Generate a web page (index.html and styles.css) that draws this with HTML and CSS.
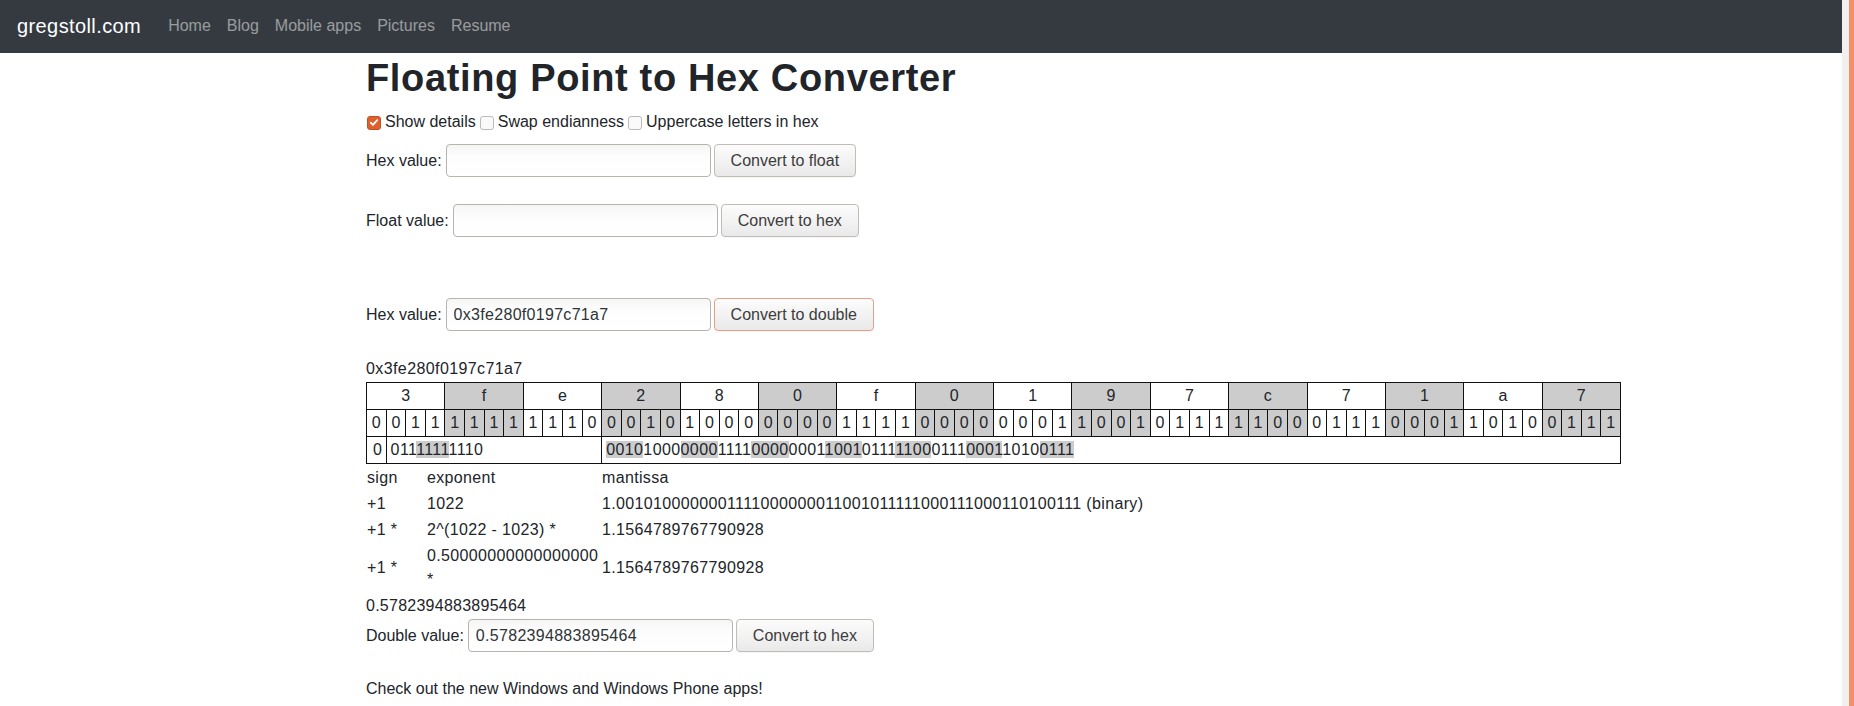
FILE: index.html
```html
<!DOCTYPE html>
<html lang="en">
<head>
<meta charset="utf-8">
<title>Floating Point to Hex Converter</title>
<link rel="stylesheet" href="styles.css">
</head>
<body>
<div class="page">
  <nav class="navbar">
    <a class="brand" href="#">gregstoll.com</a>
    <a class="nav-link" href="#">Home</a>
    <a class="nav-link" href="#">Blog</a>
    <a class="nav-link" href="#">Mobile apps</a>
    <a class="nav-link" href="#">Pictures</a>
    <a class="nav-link" href="#">Resume</a>
  </nav>
  <main class="container">
    <h1 class="title">Floating Point to Hex Converter</h1>
    <div class="opts">
      <label class="opt"><span class="cb checked"><svg width="13" height="13" viewBox="0 0 13 13"><path d="M3 6.6 L5.4 9 L10 4" fill="none" stroke="#fff" stroke-width="1.9" stroke-linecap="round" stroke-linejoin="round"/></svg></span>Show details</label>
      <label class="opt"><span class="cb"></span>Swap endianness</label>
      <label class="opt"><span class="cb"></span>Uppercase letters in hex</label>
    </div>
    <div class="form-row r1">
      <span class="lbl">Hex value:</span>
      <input class="field" type="text" value="">
      <button class="btn">Convert to float</button>
    </div>
    <div class="form-row r2">
      <span class="lbl">Float value:</span>
      <input class="field" type="text" value="">
      <button class="btn">Convert to hex</button>
    </div>
    <div class="form-row r3">
      <span class="lbl">Hex value:</span>
      <input class="field num" type="text" value="0x3fe280f0197c71a7">
      <button class="btn btn-focus">Convert to double</button>
    </div>
    <div class="hexout">0x3fe280f0197c71a7</div>
    <table class="bits">
      <colgroup>
        <col><col><col><col><col><col><col><col><col><col><col><col><col><col><col><col>
        <col><col><col><col><col><col><col><col><col><col><col><col><col><col><col><col>
        <col><col><col><col><col><col><col><col><col><col><col><col><col><col><col><col>
        <col><col><col><col><col><col><col><col><col><col><col><col><col><col><col><col>
      </colgroup>
      <tr class="hexrow">
        <td colspan="4">3</td><td colspan="4" class="g">f</td><td colspan="4">e</td><td colspan="4" class="g">2</td>
        <td colspan="4">8</td><td colspan="4" class="g">0</td><td colspan="4">f</td><td colspan="4" class="g">0</td>
        <td colspan="4">1</td><td colspan="4" class="g">9</td><td colspan="4">7</td><td colspan="4" class="g">c</td>
        <td colspan="4">7</td><td colspan="4" class="g">1</td><td colspan="4">a</td><td colspan="4" class="g">7</td>
      </tr>
      <tr class="bitrow">
        <td>0</td><td>0</td><td>1</td><td>1</td>
        <td class="g">1</td><td class="g">1</td><td class="g">1</td><td class="g">1</td>
        <td>1</td><td>1</td><td>1</td><td>0</td>
        <td class="g">0</td><td class="g">0</td><td class="g">1</td><td class="g">0</td>
        <td>1</td><td>0</td><td>0</td><td>0</td>
        <td class="g">0</td><td class="g">0</td><td class="g">0</td><td class="g">0</td>
        <td>1</td><td>1</td><td>1</td><td>1</td>
        <td class="g">0</td><td class="g">0</td><td class="g">0</td><td class="g">0</td>
        <td>0</td><td>0</td><td>0</td><td>1</td>
        <td class="g">1</td><td class="g">0</td><td class="g">0</td><td class="g">1</td>
        <td>0</td><td>1</td><td>1</td><td>1</td>
        <td class="g">1</td><td class="g">1</td><td class="g">0</td><td class="g">0</td>
        <td>0</td><td>1</td><td>1</td><td>1</td>
        <td class="g">0</td><td class="g">0</td><td class="g">0</td><td class="g">1</td>
        <td>1</td><td>0</td><td>1</td><td>0</td>
        <td class="g">0</td><td class="g">1</td><td class="g">1</td><td class="g">1</td>
      </tr>
      <tr class="partrow">
        <td class="sgn">0</td>
        <td colspan="11">011<span class="hl">1111</span>1110</td>
        <td colspan="52"><span class="hl">0010</span>1000<span class="hl">0000</span>1111<span class="hl">0000</span>0001<span class="hl">1001</span>0111<span class="hl">1100</span>0111<span class="hl">0001</span>1010<span class="hl">0111</span></td>
      </tr>
    </table>
    <table class="details">
      <tr><td class="c-sign">sign</td><td class="c-exp">exponent</td><td>mantissa</td></tr>
      <tr><td>+1</td><td>1022</td><td>1.0010100000001111000000011001011111000111000110100111 (binary)</td></tr>
      <tr><td>+1 *</td><td>2^(1022 - 1023) *</td><td>1.1564789767790928</td></tr>
      <tr><td>+1 *</td><td>0.50000000000000000 *</td><td>1.1564789767790928</td></tr>
    </table>
    <div class="result">0.5782394883895464</div>
    <div class="form-row r4">
      <span class="lbl">Double value:</span>
      <input class="field num" type="text" value="0.5782394883895464">
      <button class="btn">Convert to hex</button>
    </div>
    <p class="promo">Check out the new Windows and Windows Phone apps!</p>
  </main>
</div>
<div class="scrollbar"><div class="thumb"></div></div>
</body>
</html>
```

FILE: styles.css
```css
html, body {
  margin: 0;
  padding: 0;
  overflow: hidden;
  background: #fff;
}
body {
  font-family: "Liberation Sans", Arial, sans-serif;
  font-size: 16px;
  line-height: 24px;
  color: #212529;
}
.page {
  width: 1842px;
  height: 706px;
  overflow: hidden;
}
.navbar {
  height: 53px;
  background: #343a40;
  display: flex;
  align-items: center;
  padding: 0 16px 2px 17px;
  box-sizing: border-box;
}
.brand {
  color: #fff;
  font-size: 20px;
  line-height: 30px;
  letter-spacing: 0.4px;
  text-decoration: none;
  margin-right: 19px;
}
.nav-link {
  color: rgba(255, 255, 255, 0.5);
  text-decoration: none;
  padding: 0 8px;
  line-height: 24px;
}
.container {
  width: 1110px;
  margin: 0 auto;
  padding: 0 15px;
}
.title {
  margin: 1px 0 8px;
  font-size: 38px;
  font-weight: bold;
  letter-spacing: 0.65px;
  line-height: 48px;
  color: #212529;
}
.opts {
  display: flex;
  align-items: center;
  height: 24px;
  margin-bottom: 10px;
}
.opt {
  display: inline-flex;
  align-items: center;
  gap: 4px;
  margin-right: 3px;
}
.cb {
  width: 12px;
  height: 12px;
  border: 1px solid #bdb9b4;
  border-radius: 3px;
  background: #fafafa;
  display: inline-flex;
  align-items: center;
  justify-content: center;
  margin-left: 1px;
  margin-top: 1px;
}
.cb svg {
  display: block;
}
.cb.checked {
  background: #de602f;
  border-color: #c6501f;
}
.form-row {
  display: flex;
  align-items: center;
  height: 33px;
  gap: 4px;
}
.form-row .field {
  margin-right: -1px;
}
.r1 { margin-bottom: 27px; }
.r2 { margin-bottom: 61px; }
.r3 { margin-bottom: 26px; }
.r4 { margin-top: 1px; }
.lbl {
  white-space: nowrap;
}
.field {
  width: 265px;
  height: 33px;
  box-sizing: border-box;
  border: 1px solid #b7b3ad;
  border-radius: 4px;
  background: linear-gradient(#f6f6f6, #fdfdfd 40%, #fff);
  font-family: "Liberation Sans", Arial, sans-serif;
  font-size: 16px;
  color: #2e3436;
  padding: 0 7px;
  outline: none;
}
.field.num {
  letter-spacing: 0.3px;
}
.btn {
  height: 33px;
  box-sizing: border-box;
  border: 1px solid #c0bcb6;
  border-radius: 4px;
  background: linear-gradient(#fcfcfc, #f1f1f1 60%, #e9e9e9);
  font-family: "Liberation Sans", Arial, sans-serif;
  font-size: 16px;
  color: #3c3c3c;
  padding: 0 16px;
  box-shadow: 0 1px 0 rgba(0, 0, 0, 0.04);
}
.btn-focus {
  border-color: #e59f86;
}
.hexout {
  height: 24px;
  margin-bottom: 1px;
  letter-spacing: 0.4px;
}
.bits {
  width: 1255px;
  table-layout: fixed;
  border-collapse: collapse;
}
.bits td {
  border: 1px solid #111;
  padding: 1px 0;
  text-align: center;
  line-height: 24px;
  white-space: nowrap;
  overflow: hidden;
}
.bits td.g {
  background: #cccccc;
}
.bits .partrow td {
  text-align: left;
  padding: 1px 4px;
  letter-spacing: 0.4px;
}
.bits .partrow td.sgn {
  padding-left: 6px;
}
.hl {
  background: #cccccc;
}
.details {
  border-collapse: collapse;
  margin-top: 1px;
  letter-spacing: 0.35px;
}
.details td {
  padding: 1px;
  vertical-align: middle;
  text-align: left;
}
.details .c-sign {
  width: 58px;
}
.details .c-exp {
  width: 173px;
}
.result {
  height: 24px;
  margin-top: 1px;
  letter-spacing: 0.25px;
}
.promo {
  margin: 25px 0 0;
}
.scrollbar {
  position: fixed;
  top: 0;
  right: 0;
  width: 12px;
  height: 706px;
  background: #f1f0ef;
}
.thumb {
  position: absolute;
  right: 0;
  top: 0;
  width: 5px;
  height: 706px;
  background: #f39069;
}
```
